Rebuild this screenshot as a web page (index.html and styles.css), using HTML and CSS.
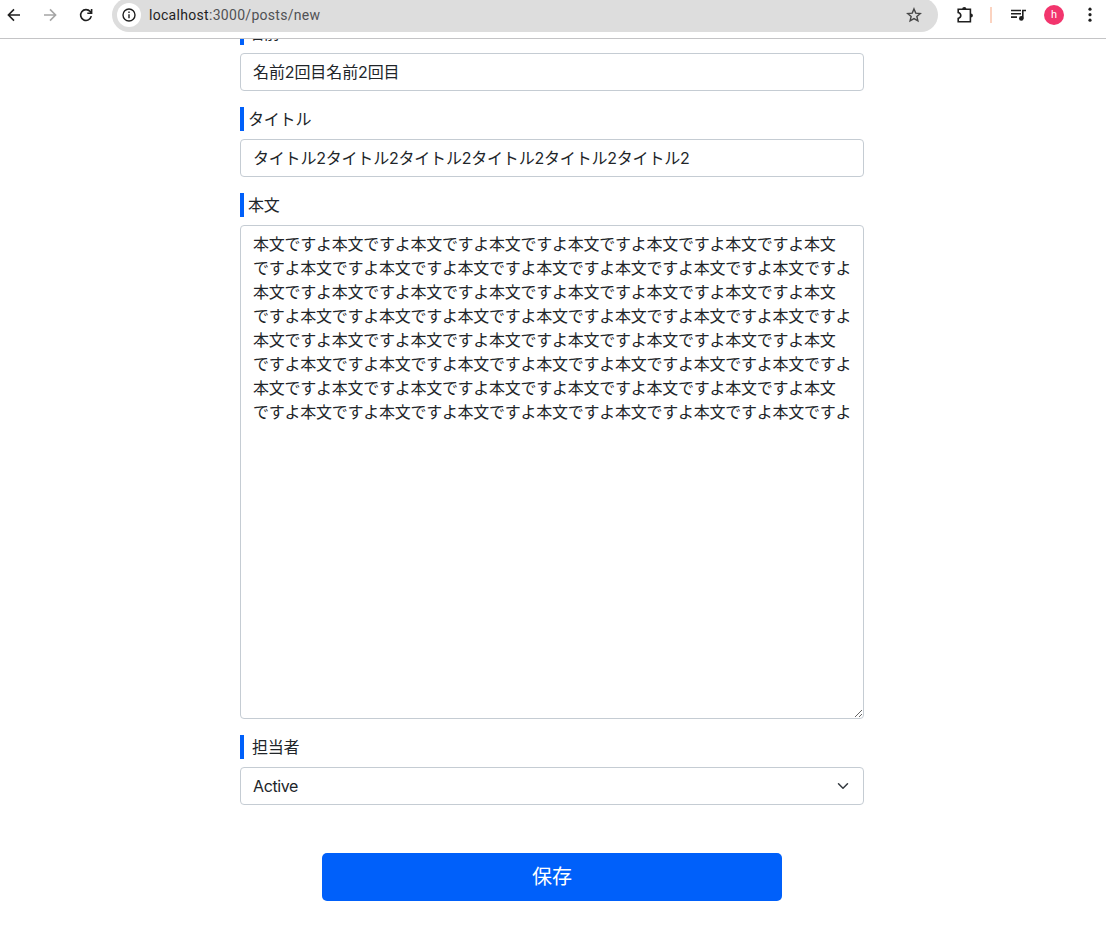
FILE: index.html
```html
<!DOCTYPE html>
<html lang="ja">
<head>
<meta charset="utf-8">
<title>posts/new</title>
<link rel="stylesheet" href="styles.css">
</head>
<body>
<header class="toolbar">
  <svg class="nav" viewBox="0 0 16 16"><path d="M14 8H2.6M8 2.4 2.4 8 8 13.6"/></svg>
  <svg class="nav nav-off" viewBox="0 0 16 16"><path d="M2 8h11.4M8 2.4 13.6 8 8 13.6"/></svg>
  <svg class="nav" viewBox="0 0 16 16"><path d="M13.3 9.2A5.4 5.4 0 1 1 12.2 4.6L13.4 6M13.6 1.9V6.2H9.3"/></svg>
  <div class="omnibox">
    <span class="info"><svg viewBox="0 0 16 16"><circle cx="8" cy="8" r="6"/><path d="M8 7.3v4M8 4.6v1.5"/></svg></span>
    <span class="url"><span class="host">localhost</span>:3000/posts/new</span>
    <svg class="star" viewBox="0 0 16 16"><path d="m8 1.9 1.75 4.2 4.55.4-3.45 3 1.05 4.4L8 11.6l-3.9 2.3 1.05-4.4-3.45-3 4.55-.4z"/></svg>
  </div>
  <svg class="puzzle" viewBox="0 0 18 18"><path d="M2.2 3.2H14.4V15.8H2.2V12.4Q4.8 11.6 4.8 9.5T2.2 6.6Z"/><path class="solid" d="M6.2 3a2.1 2.1 0 0 1 4.2 0zM14.8 7.4a2.1 2.1 0 0 1 0 4.2z"/></svg>
  <span class="divider"></span>
  <svg class="media" viewBox="0 0 18 16"><path d="M1 3.5h10M1 6.8h10M1 10.1h6M12.8 11.5V3.5H16"/><circle class="solid" cx="11.3" cy="11.4" r="2.3"/></svg>
  <span class="avatar">h</span>
  <svg class="more" viewBox="0 0 4 16"><circle cx="2" cy="2.2" r="1.6"/><circle cx="2" cy="7.7" r="1.6"/><circle cx="2" cy="13.2" r="1.6"/></svg>
</header>
<main class="viewport">
  <form class="form">
    <label class="label">名前</label>
    <input class="control name" value="名前2回目名前2回目">
    <label class="label">タイトル</label>
    <input class="control title" value="タイトル2タイトル2タイトル2タイトル2タイトル2タイトル2">
    <label class="label">本文</label>
    <textarea class="control body">本文ですよ本文ですよ本文ですよ本文ですよ本文ですよ本文ですよ本文ですよ本文
ですよ本文ですよ本文ですよ本文ですよ本文ですよ本文ですよ本文ですよ本文ですよ
本文ですよ本文ですよ本文ですよ本文ですよ本文ですよ本文ですよ本文ですよ本文
ですよ本文ですよ本文ですよ本文ですよ本文ですよ本文ですよ本文ですよ本文ですよ
本文ですよ本文ですよ本文ですよ本文ですよ本文ですよ本文ですよ本文ですよ本文
ですよ本文ですよ本文ですよ本文ですよ本文ですよ本文ですよ本文ですよ本文ですよ
本文ですよ本文ですよ本文ですよ本文ですよ本文ですよ本文ですよ本文ですよ本文
ですよ本文ですよ本文ですよ本文ですよ本文ですよ本文ですよ本文ですよ本文ですよ</textarea>
    <label class="label label-wide">担当者</label>
    <div class="control select"><span>Active</span><svg viewBox="0 0 16 16"><path d="m2 5 6 6 6-6"/></svg></div>
    <button class="save" type="button">保存</button>
  </form>
</main>
</body>
</html>
```
FILE: styles.css
```css
* { box-sizing: border-box; }
body {
  margin: 0;
  height: 942px;
  overflow: hidden;
  display: flex;
  flex-direction: column;
  background: #fff;
  color: #212529;
  font: 16px/24px Inter, "Noto Sans CJK JP", sans-serif;
}
svg { display: block; flex: none; fill: none; stroke: #1f1f1f; stroke-width: 1.6; }
.solid { fill: #1f1f1f; stroke: none; }
.toolbar {
  flex: none;
  height: 39px;
  padding: 0 14px 8px 6px;
  border-bottom: 1px solid #c4c4c6;
  display: flex;
  align-items: center;
}
.nav { width: 16px; height: 16px; margin-right: 20px; }
.nav-off { stroke: #a5a5a5; }
.omnibox {
  width: 826px;
  height: 34px;
  margin: -1px 18px 0 -2px;
  padding: 0 16px 0 5px;
  border-radius: 17px;
  background: #ddd;
  display: flex;
  align-items: center;
}
.info {
  width: 24px;
  height: 24px;
  border-radius: 50%;
  background: #fff;
  display: grid;
  place-items: center;
}
.info svg { width: 16px; height: 16px; stroke-width: 1.4; }
.url { flex: 1; margin-left: 8px; color: #505154; font: 14px/20px Roboto, sans-serif; letter-spacing: .3px; }
.host { color: #1f1f1f; }
.star { width: 16px; height: 16px; stroke: #474747; stroke-width: 1.4; }
.puzzle { width: 18px; height: 18px; }
.divider { width: 2px; height: 16px; margin: 0 18px 0 16px; background: #fbd3c0; }
.media { width: 18px; height: 16px; }
.avatar {
  width: 20px;
  height: 20px;
  margin: 0 34px 0 16px;
  border-radius: 50%;
  background: #f2356d;
  color: #fff;
  font: 11px/20px Roboto, sans-serif;
  text-align: center;
}
.more { width: 4px; height: 16px; margin-left: -10px; fill: #1f1f1f; stroke: none; }
.viewport { flex: 1; min-height: 0; overflow: hidden; }
.form {
  width: 624px;
  margin: -18px 0 0 240px;
  display: flex;
  flex-direction: column;
}
.label { height: 24px; margin-bottom: 8px; padding-left: 4px; border-left: 4px solid #0060fa; line-height: 25px; letter-spacing: -.2px; }
.label-wide { padding-left: 8px; }
.control {
  width: 100%;
  height: 38px;
  margin: 0 0 16px;
  padding: 6px 12px;
  border: 1px solid #c5ccd3;
  border-radius: 4px;
  background: #fff;
  color: #212529;
  font: inherit;
}
.name { padding: 5px 12px 7px; letter-spacing: -.1px; }
.title { padding: 5px 12px 7px; letter-spacing: -.2px; }
.body { height: 494px; white-space: pre; overflow: hidden; letter-spacing: -.26px; resize: both; }
.select { display: flex; align-items: center; justify-content: space-between; letter-spacing: -.4px; }
.select svg { width: 12px; height: 12px; margin-right: 2px; stroke: #343a40; stroke-width: 2; stroke-linecap: round; stroke-linejoin: round; }
.save {
  width: 460px;
  height: 48px;
  margin: 32px 0 0 82px;
  padding: 0 0 2px;
  border: 0;
  border-radius: 5px;
  background: #0060fa;
  color: #fff;
  font: 20px/46px "Noto Sans CJK JP", sans-serif;
}
```
